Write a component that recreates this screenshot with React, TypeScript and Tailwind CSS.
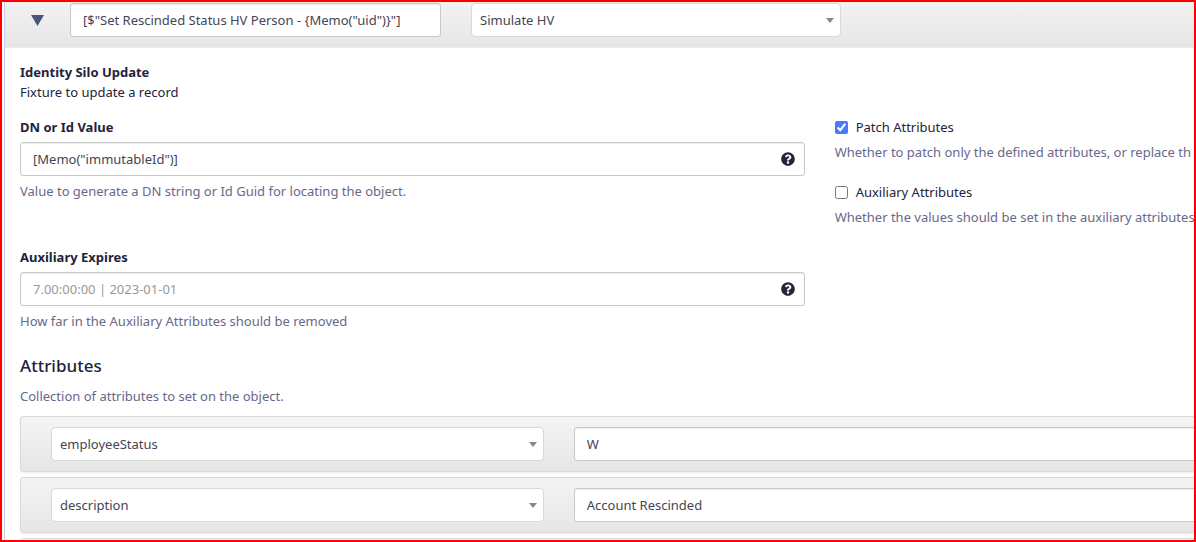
import React from "react";
import { FaQuestionCircle } from "react-icons/fa";

const inputClass =
  "block w-full h-[34px] px-3 rounded-[3px] border border-[#c8c8c8] bg-white text-[#454552] placeholder-[#999999] shadow-[inset_0_1px_1px_rgba(0,0,0,0.08)] outline-none focus:border-blue-400";

// Drop-down with its own arrow
interface SelectBoxProps {
  label: string;
  options: string[];
}

const SelectBox = ({ label, options }: SelectBoxProps) => (
  <div className="relative">
    <select
      aria-label={label}
      className="block w-full h-[34px] pl-2 pr-6 appearance-none rounded-[4px] border border-[#d9d9d9] bg-white text-[#454552] outline-none focus:border-blue-400"
    >
      {options.map((option) => (
        <option key={option}>{option}</option>
      ))}
    </select>
    <svg
      viewBox="0 0 8 5"
      className="absolute right-[7px] top-[15px] w-2 h-[5px] pointer-events-none"
      fill="#888888"
    >
      <path d="M0 0h8L4 5z" />
    </svg>
  </div>
);

// Labelled text box with a help button and a hint below
interface TextFieldProps {
  id: string;
  label: string;
  hint: string;
  value?: string;
  placeholder?: string;
}

const TextField = ({ id, label, hint, value, placeholder }: TextFieldProps) => (
  <div>
    <label htmlFor={id} className="block mb-[5px] font-bold">
      {label}
    </label>
    <div className="relative">
      <input id={id} type="text" defaultValue={value} placeholder={placeholder} className={inputClass} />
      <button type="button" aria-label="Help" className="absolute right-[10px] top-[10px] text-[#23233a]">
        <FaQuestionCircle size={14} />
      </button>
    </div>
    <p className="mt-[5px] text-[#68688a]">{hint}</p>
  </div>
);

interface CheckFieldProps {
  id: string;
  label: string;
  hint: string;
  checked?: boolean;
}

const CheckField = ({ id, label, hint, checked }: CheckFieldProps) => (
  <div>
    <div className="flex items-center gap-2">
      <input id={id} type="checkbox" defaultChecked={checked} className="w-[13px] h-[13px] accent-[#4a78ff]" />
      <label htmlFor={id}>{label}</label>
    </div>
    <p className="mt-[5px] text-[#68688a]">{hint}</p>
  </div>
);

const cardClass =
  "rounded-[3px] border border-[#dadada] bg-linear-to-b from-[#f4f4f4] to-[#e6e6e6] shadow-[0_1px_2px_rgba(0,0,0,0.08)]";

const attributes = [
  { name: "employeeStatus", value: "W" },
  { name: "description", value: "Account Rescinded" },
];

const App = () => {
  return (
    <div className="h-screen overflow-hidden border-2 border-[#ff0000] bg-white pl-[2px] text-[13px] leading-5 text-[#23233a] font-['Noto_Sans','Open_Sans',sans-serif]">
      {/* The form is wider than the window */}
      <div className="w-[137%] min-h-full border-l border-[#c5cee0]">
        {/* Step header */}
        <header className="flex items-center pt-px pb-[10px] border-b border-[#ececec] bg-linear-to-b from-[#f2f2f2] to-[#e6e6e6]">
          <button type="button" aria-label="Collapse" className="w-[65px] flex justify-center shrink-0">
            <svg viewBox="0 0 13 11" className="w-[13px] h-[11px]" fill="#475679">
              <path d="M0 0h13L6.500 11z" />
            </svg>
          </button>
          <div className="flex-1 grid grid-cols-[371fr_370fr_763fr] gap-[30px]">
            <input
              type="text"
              aria-label="Step name"
              defaultValue={'[$"Set Rescinded Status HV Person - {Memo("uid")}"]'}
              className={inputClass}
            />
            <SelectBox label="System" options={["Simulate HV"]} />
          </div>
        </header>

        <main className="px-[15px] pt-[14px]">
          <h2 className="font-bold">Identity Silo Update</h2>
          <p>Fixture to update a record</p>

          {/* Fields */}
          <div className="mt-[15px] grid grid-cols-2 gap-x-[30px] gap-y-5">
            <TextField
              id="dn"
              label="DN or Id Value"
              value={'[Memo("immutableId")]'}
              hint="Value to generate a DN string or Id Guid for locating the object."
            />
            <div className="flex flex-col gap-5">
              <CheckField
                id="patch"
                label="Patch Attributes"
                hint="Whether to patch only the defined attributes, or replace th"
                checked
              />
              <CheckField
                id="auxiliary"
                label="Auxiliary Attributes"
                hint="Whether the values should be set in the auxiliary attributes"
              />
            </div>
            <TextField
              id="expires"
              label="Auxiliary Expires"
              placeholder="7.00:00:00 | 2023-01-01"
              hint="How far in the Auxiliary Attributes should be removed"
            />
          </div>

          {/* Attribute list */}
          <h3 className="mt-[23px] text-[17px] leading-6 font-medium">Attributes</h3>
          <p className="mt-2 text-[#68688a]">Collection of attributes to set on the object.</p>
          <div className="mt-[10px] flex flex-col gap-[5px]">
            {attributes.map((attribute) => (
              <div
                key={attribute.name}
                className={`grid grid-cols-3 gap-[30px] py-[10px] pl-[30px] pr-[29px] ${cardClass}`}
              >
                <SelectBox label="Attribute" options={[attribute.name]} />
                <input
                  type="text"
                  aria-label={`${attribute.name} value`}
                  defaultValue={attribute.value}
                  className={`col-span-2 ${inputClass}`}
                />
              </div>
            ))}
            <div className={`h-14 ${cardClass}`} />
          </div>
        </main>
      </div>
    </div>
  );
};

export default App;
